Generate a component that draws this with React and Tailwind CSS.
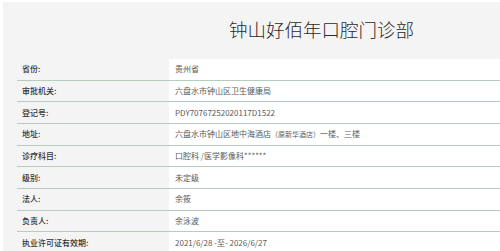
import React from 'react';

const rows = [
  { label: '省份:', value: '贵州省' },
  { label: '审批机关:', value: '六盘水市钟山区卫生健康局' },
  { label: '登记号:', value: 'PDY70767252020117D1522' },
  {
    label: '地址:',
    value: (
      <>
        六盘水市钟山区地中海酒店
        <span className="text-[7px]">（原新华酒店）</span>
        一楼、三楼
      </>
    ),
  },
  { label: '诊疗科目:', value: '口腔科 /医学影像科******' },
  { label: '级别:', value: '未定级' },
  { label: '法人:', value: '余筱' },
  { label: '负责人:', value: '余泳波' },
  { label: '执业许可证有效期:', value: '2021/6/28 -至- 2026/6/27' },
];

const App = () => {
  return (
    <div
      className="w-[500px] h-[251px] overflow-hidden bg-white pt-[2px] pl-[3px]"
      style={{ fontFamily: '"Noto Sans CJK SC", "Noto Sans", sans-serif' }}
    >
      <div className="h-full bg-[#f4f4f4]">
        {/* Header */}
        <div className="h-[57px] flex items-center pl-[226px] pb-[2px]">
          <h1 className="text-[18.5px] leading-none font-light text-[#2a2a2a]">
            钟山好佰年口腔门诊部
          </h1>
        </div>

        {/* Table */}
        <div className="ml-[14px]">
          {rows.map((row, idx) => (
            <div
              key={idx}
              className="grid grid-cols-[152px_1fr] h-[21.67px] box-border border-b-[1.5px] border-[#b4cdbc]"
            >
              <div className="flex items-center pl-[5px] text-[8px] font-medium text-[#333]">
                {row.label}
              </div>
              <div className="flex items-center bg-white pl-[6px] text-[8px] text-[#5a5a5a] whitespace-nowrap">
                {row.value}
              </div>
            </div>
          ))}
        </div>
      </div>
    </div>
  );
};

export default App;
